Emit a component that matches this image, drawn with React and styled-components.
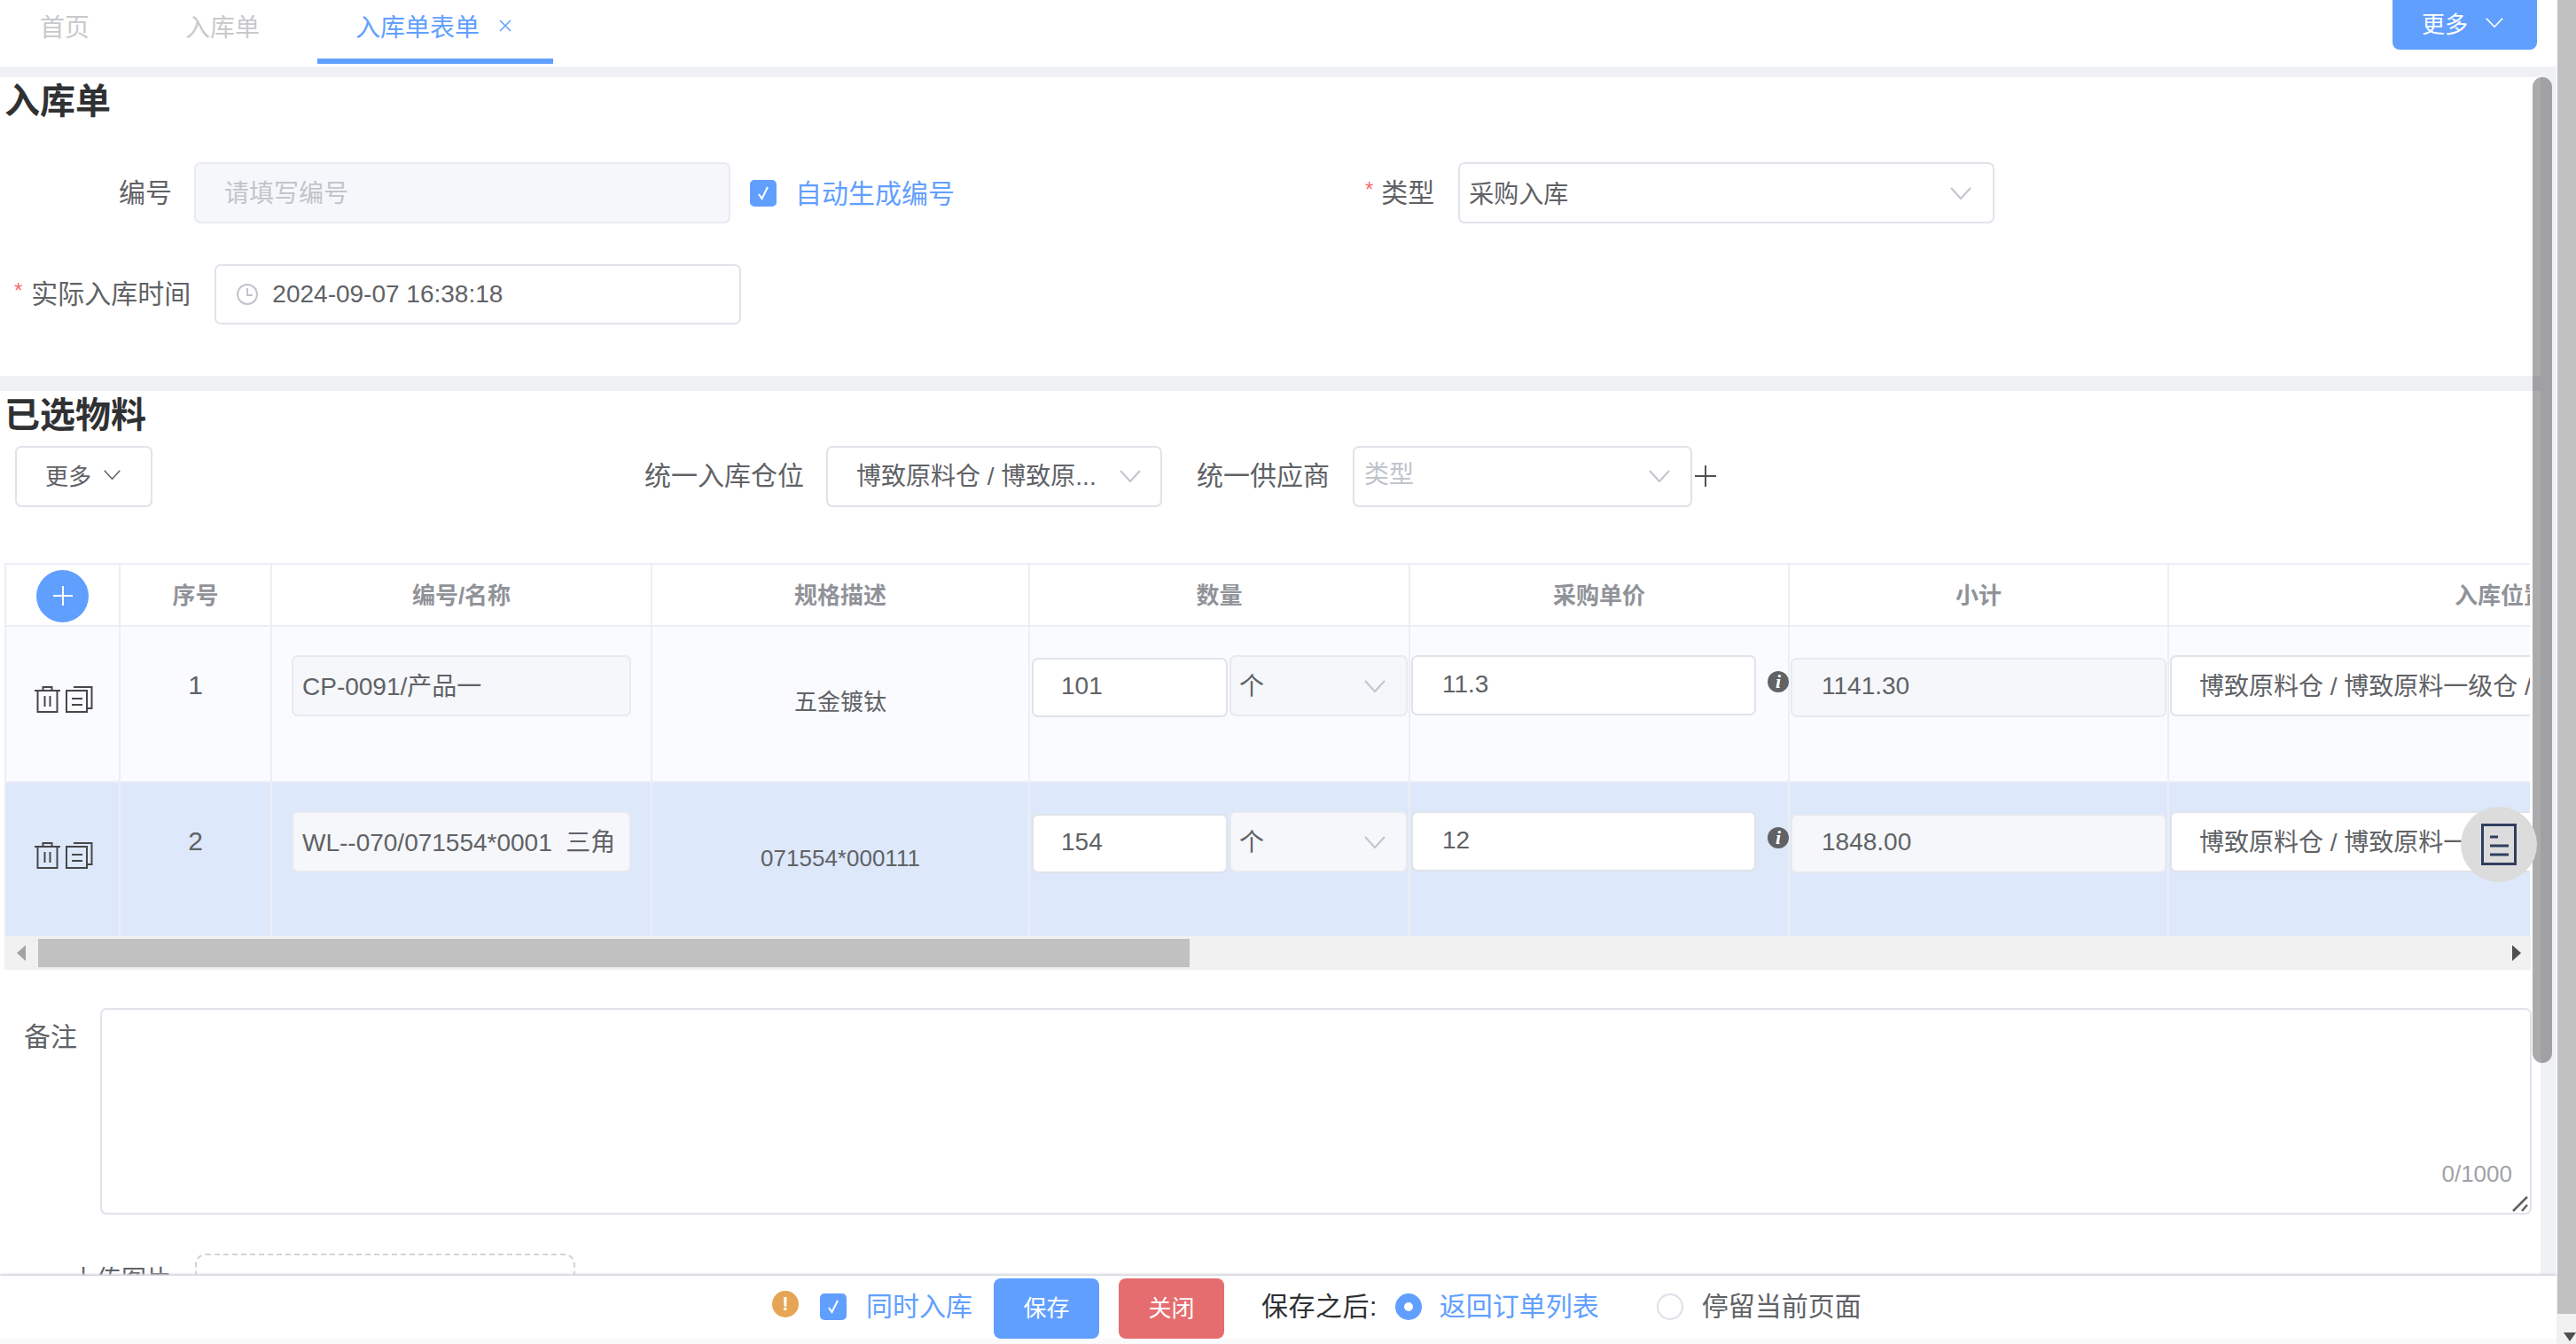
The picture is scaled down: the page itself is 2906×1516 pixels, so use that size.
import React from 'react';
import styled, { createGlobalStyle } from 'styled-components';

const BLUE = '#619fff';
const FONT = '"Liberation Sans", "Noto Sans CJK SC", sans-serif';
const TEXT = '#606266';
const LINE = '#ebeef5';
const INPUT_LINE = '#e0e3ea';
const COLUMNS = '129px 171px 429px 426px 429px 428px 428px 750px';

const Global = createGlobalStyle`
  * { box-sizing: border-box; }
  html, body { margin: 0; padding: 0; background: #fff; overflow: hidden; }
  body { font-family: ${FONT}; color: ${TEXT}; }
`;

const Page = styled.div`
  width: 2906px;
  height: 1516px;
  display: flex;
  overflow: hidden;
  background: #fff;
`;
const Main = styled.div`
  width: 2884px;
  height: 1516px;
  display: flex;
  flex-direction: column;
  background: #f0f1f5;
`;

/* page scrollbar */
const PageScroll = styled.div`
  width: 21px;
  margin-left: 1px;
  display: flex;
  flex-direction: column;
`;
const PageThumb = styled.div`
  height: 1482px;
  background: #c1c1c1;
`;
const PageTrack = styled.div`
  flex: 1;
  background: #f1f1f1;
  display: flex;
  align-items: flex-end;
  padding: 0 0 3px 7px;
`;
const ArrowDown = styled.div`
  border-left: 7px solid transparent;
  border-right: 7px solid transparent;
  border-top: 10px solid #505050;
`;

/* tabs */
const TabBar = styled.div`
  height: 75px;
  flex: none;
  display: flex;
  align-items: flex-start;
  gap: 20px;
  padding-left: 1px;
  background: #fff;
`;
const Tab = styled.div`
  height: 72px;
  margin-left: ${(p) => (p.$active ? '1px' : '0')};
  padding: 0 ${(p) => (p.$active ? '47px' : '44px')} 9px ${(p) => (p.$active ? '43px' : '44px')};
  border-bottom: 6px solid ${(p) => (p.$active ? BLUE : 'transparent')};
  display: flex;
  align-items: center;
  font-size: 28px;
  color: ${(p) => (p.$active ? BLUE : '#c8c9cc')};
`;
const TabClose = styled.svg`
  margin-left: 22px;
  width: 14px;
  height: 14px;
`;
const MoreTop = styled.div`
  margin-left: auto;
  margin-right: 22px;
  width: 163px;
  height: 56px;
  padding: 0 0 6px 33px;
  border-radius: 0 0 8px 8px;
  background: ${BLUE};
  color: #fff;
  font-size: 26px;
  display: flex;
  align-items: center;
  gap: 20px;
`;

/* scrolling pane */
const Pane = styled.div`
  position: relative;
  flex: 1;
  margin-top: 8px;
  min-height: 0;
  overflow: hidden;
  background: #f0f1f5;
`;
const PaneThumb = styled.div`
  position: absolute;
  z-index: 1;
  left: 2857px;
  top: 4px;
  width: 22px;
  height: 1112px;
  border-radius: 11px;
  background: rgba(0, 0, 0, 0.33);
`;
const Section = styled.section`
  width: 2866px;
  background: #fff;
  height: ${(p) => p.$h}px;
  margin-bottom: ${(p) => p.$mb || 0}px;
`;
const Title = styled.h2`
  margin: ${(p) => p.$mt}px 0 0;
  padding-left: 5px;
  height: 54px;
  line-height: 54px;
  font-size: 40px;
  font-weight: 700;
  color: #303133;
`;
const FormRow = styled.div`
  display: flex;
  align-items: center;
  margin-top: ${(p) => p.$mt}px;
  padding-left: ${(p) => p.$pl}px;
`;
const Label = styled.label`
  font-size: 30px;
  line-height: 40px;
  color: ${TEXT};
  margin-left: ${(p) => p.$ml || 0}px;
  white-space: nowrap;
  flex: none;
`;
const Star = styled.span`
  font-size: 24px;
  line-height: 24px;
  color: #f56c6c;
  flex: none;
  margin-left: ${(p) => p.$ml || 0}px;
  margin-right: ${(p) => p.$mr}px;
  margin-bottom: 8px;
`;
const Field = styled.div`
  flex: none;
  display: flex;
  align-items: center;
  width: ${(p) => p.$w}px;
  height: ${(p) => p.$h || 69}px;
  margin-left: ${(p) => p.$ml || 0}px;
  margin-top: ${(p) => p.$mt || 0}px;
  padding: 0 ${(p) => p.$pr || 0}px 4px ${(p) => p.$pl || 0}px;
  border: 2px solid ${(p) => (p.$off ? '#e8eaf0' : INPUT_LINE)};
  border-radius: 7px;
  background: ${(p) => (p.$off ? '#f5f7fa' : '#fff')};
  color: ${(p) => (p.$muted ? '#c0c4cc' : TEXT)};
  font-size: 28px;
  white-space: nowrap;
  overflow: hidden;
`;
const FieldText = styled.span`
  flex: 1;
  min-width: 0;
  overflow: hidden;
  white-space: pre;
  padding-top: ${(p) => p.$down || 0}px;
  padding-bottom: ${(p) => p.$up || 0}px;
`;
const FieldChevron = styled.span`
  display: flex;
  flex: none;
  margin-top: 4px;
`;
const CheckBox = styled.span`
  flex: none;
  width: 30px;
  height: 30px;
  margin-left: ${(p) => p.$ml}px;
  margin-bottom: ${(p) => p.$mb || 0}px;
  border-radius: 5px;
  background: ${BLUE};
  display: flex;
  align-items: center;
  justify-content: center;
`;
const BlueText = styled.span`
  flex: none;
  font-size: 30px;
  color: ${BLUE};
  margin-left: ${(p) => p.$ml}px;
  margin-bottom: ${(p) => p.$mb || 0}px;
`;
const ClockIcon = styled.svg`
  width: 24px;
  height: 24px;
  margin-right: 16px;
  margin-top: 4px;
  flex: none;
`;
const Chevron = styled.svg`
  width: ${(p) => p.$w || 24}px;
  height: ${(p) => p.$hh || 14}px;
  flex: none;
`;

/* toolbar above table */
const Toolbar = styled.div`
  display: flex;
  align-items: center;
  height: 70px;
  margin-top: 7px;
  padding-left: 17px;
`;
const MoreButton = styled.div`
  width: 155px;
  height: 69px;
  padding: 0 0 3px 32px;
  border: 2px solid ${INPUT_LINE};
  border-radius: 7px;
  font-size: 26px;
  display: flex;
  align-items: center;
  gap: 14px;
`;
const PlusIcon = styled.svg`
  width: 24px;
  height: 24px;
  margin-left: 3px;
  flex: none;
`;

/* table */
const TableWrap = styled.div`
  margin: 63px 0 0 5px;
  width: 2850px;
`;
const TableClip = styled.div`
  width: 2849px;
  overflow: hidden;
`;
const Table = styled.div`
  width: 3200px;
  border-left: 2px solid ${LINE};
  border-top: 2px solid ${LINE};
`;
const HeadRow = styled.div`
  display: grid;
  grid-template-columns: ${COLUMNS};
  height: 70px;
  background: #fff;
  border-bottom: 2px solid ${LINE};
`;
const HeadCell = styled.div`
  display: flex;
  align-items: center;
  justify-content: center;
  padding-bottom: 3px;
  border-right: 2px solid ${LINE};
  font-size: 26px;
  font-weight: 700;
  color: #909399;
  white-space: nowrap;
`;
const AddCircle = styled.div`
  width: 59px;
  height: 59px;
  margin-top: 5px;
  border-radius: 50%;
  background: ${BLUE};
  display: flex;
  align-items: center;
  justify-content: center;
`;
const Row = styled.div`
  display: grid;
  grid-template-columns: ${COLUMNS};
  height: ${(p) => p.$h}px;
  background: ${(p) => p.$bg};
  border-bottom: ${(p) => (p.$last ? 'none' : `2px solid ${LINE}`)};
`;
const Cell = styled.div`
  border-right: 2px solid ${LINE};
  display: flex;
  align-items: flex-start;
`;
const ActionCell = styled(Cell)`
  padding: 66px 0 0 32px;
  gap: 5px;
`;
const SeqCell = styled(Cell)`
  justify-content: center;
  padding-top: 48px;
  font-size: 30px;
  line-height: 36px;
`;
const SpecCell = styled(Cell)`
  justify-content: center;
  padding-top: 67px;
  font-size: 26px;
  line-height: 36px;
`;
const InfoBadge = styled.span`
  flex: none;
  width: 24px;
  height: 24px;
  margin: 50px 0 0 13px;
  border-radius: 50%;
  background: ${TEXT};
  color: #fff;
  font: italic 700 22px/24px "Liberation Serif", serif;
  text-align: center;
`;

/* horizontal scrollbar */
const HScroll = styled.div`
  height: 38px;
  background: #f1f1f1;
  display: flex;
  align-items: center;
  padding: 0 11px 0 14px;
`;
const ArrowLeft = styled.div`
  border-top: 9px solid transparent;
  border-bottom: 9px solid transparent;
  border-right: 10px solid #a3a3a3;
`;
const ArrowRight = styled.div`
  margin-left: auto;
  border-top: 9px solid transparent;
  border-bottom: 9px solid transparent;
  border-left: 10px solid #505050;
`;
const HThumb = styled.div`
  width: 1299px;
  height: 32px;
  margin-left: 14px;
  background: #c1c1c1;
`;

/* floating doc button */
const FloatButton = styled.div`
  position: absolute;
  z-index: 2;
  left: 2776px;
  top: 827px;
  width: 86px;
  height: 85px;
  border-radius: 50%;
  background: #dcdcdc;
  display: flex;
  align-items: center;
  justify-content: center;
`;

/* remark */
const RemarkRow = styled.div`
  display: flex;
  align-items: flex-start;
  margin-top: 43px;
  padding-left: 27px;
`;
const RemarkLabel = styled(Label)`
  margin-top: 13px;
`;
const RemarkBox = styled.div`
  position: relative;
  width: 2743px;
  height: 233px;
  margin-left: 26px;
`;
const RemarkArea = styled.textarea`
  display: block;
  width: 100%;
  height: 100%;
  border: 2px solid ${INPUT_LINE};
  border-radius: 7px;
  resize: none;
  outline: none;
  background: #fff;
`;
const Counter = styled.span`
  position: absolute;
  right: 22px;
  bottom: 30px;
  font-size: 26px;
  color: #a0a2a8;
`;
const Grip = styled.svg`
  position: absolute;
  right: 4px;
  bottom: 3px;
  width: 18px;
  height: 18px;
`;

/* upload */
const UploadRow = styled.div`
  display: flex;
  align-items: flex-start;
  margin-top: 44px;
  padding-left: 81px;
`;
const UploadLabel = styled(Label)`
  margin-top: 10px;
  font-size: 28px;
`;
const UploadBox = styled.div`
  width: 429px;
  height: 200px;
  margin-left: 27px;
  border: 2px dashed #d0d4dc;
  border-radius: 12px;
`;

/* footer */
const Footer = styled.div`
  position: relative;
  z-index: 3;
  flex: none;
  height: 77px;
  display: flex;
  align-items: center;
  padding: 3px 0 0 871px;
  background: #fff;
  border-bottom: 6px solid #fafafa;
  box-shadow: 0 -2px 2px #d6d7dd;
`;
const WarnBadge = styled.span`
  flex: none;
  width: 30px;
  height: 30px;
  margin-bottom: 10px;
  border-radius: 50%;
  background: #e6a555;
  color: #fff;
  font-size: 22px;
  font-weight: 700;
  line-height: 30px;
  text-align: center;
`;
const ActionButton = styled.button`
  flex: none;
  width: 119px;
  height: 68px;
  margin-left: ${(p) => p.$ml}px;
  padding: 0 0 5px;
  border: none;
  border-radius: 8px;
  background: ${(p) => p.$bg};
  color: #fff;
  font: 26px ${FONT};
`;
const SaveAfter = styled.span`
  flex: none;
  margin: 0 0 10px 42px;
  font-size: 30px;
  letter-spacing: 0.5px;
  color: #303133;
`;
const Radio = styled.span`
  flex: none;
  width: 30px;
  height: 30px;
  margin-left: ${(p) => p.$ml}px;
  margin-bottom: 4px;
  border-radius: 50%;
  border: ${(p) => (p.$on ? `10px solid ${BLUE}` : '2px solid #dcdfe6')};
  background: #fff;
`;
const GrayText = styled.span`
  flex: none;
  margin: 0 0 10px ${(p) => p.$ml}px;
  font-size: 30px;
  color: ${TEXT};
`;

const Down = ({ color = '#c0c4cc', w, h }) => (
  <Chevron $w={w} $hh={h} viewBox="0 0 24 14" preserveAspectRatio="none" fill="none" stroke={color} strokeWidth="2">
    <path d="M1 1 L12 13 L23 1" />
  </Chevron>
);

const FieldDown = () => (
  <FieldChevron><Down /></FieldChevron>
);

const Check = () => (
  <svg width="20" height="20" viewBox="0 0 20 20" fill="none" stroke="#fff" strokeWidth="2">
    <path d="M5 11 L8.5 16 L15 3" />
  </svg>
);

const Trash = () => (
  <svg width="30" height="31" viewBox="0 0 30 31" fill="none" stroke="#474747" strokeWidth="2">
    <path d="M0 6H29" />
    <path d="M9.5 6V2H19.5V6" />
    <path d="M3.5 6V30H25.5V6" />
    <path d="M11.5 12V24M17.5 12V24" />
  </svg>
);

const Copy = () => (
  <svg width="31" height="31" viewBox="0 0 31 31" fill="none" stroke="#474747" strokeWidth="2">
    <rect x="1" y="6" width="23" height="24" />
    <path d="M7 15H19M7 22H19" />
    <path d="M9 2H29.5V26H25" />
  </svg>
);

const rows = [
  {
    id: 1, h: 176, bg: '#fafbff',
    name: 'CP-0091/产品一', spec: '五金镀钛', qty: '101', price: '11.3', total: '1141.30',
    place: '博致原料仓 / 博致原料一级仓 / 博致原料一级仓一号库位',
  },
  {
    id: 2, h: 173, bg: '#dde8fa', last: true,
    name: 'WL--070/071554*0001  三角', spec: '071554*000111', qty: '154', price: '12', total: '1848.00',
    place: '博致原料仓 / 博致原料一级仓 / 博致原料一级仓一号库位',
  },
];

export default function App() {
  return (
    <Page>
      <Global />
      <Main>
        <TabBar>
          <Tab>首页</Tab>
          <Tab>入库单</Tab>
          <Tab $active>
            入库单表单
            <TabClose viewBox="0 0 14 14" fill="none" stroke={BLUE} strokeWidth="1.5">
              <path d="M1 1L13 13M13 1L1 13" />
            </TabClose>
          </Tab>
          <MoreTop>
            更多
            <Down color="#fff" w={20} h={11} />
          </MoreTop>
        </TabBar>

        <Pane>
          <PaneThumb />
          <Section $h={337} $mb={17}>
            <Title $mt={4}>入库单</Title>
            <FormRow $mt={42} $pl={134}>
              <Label>编号</Label>
              <Field $w={605} $ml={25} $off $muted $pl={32}>请填写编号</Field>
              <CheckBox $ml={22}><Check /></CheckBox>
              <BlueText $ml={21} $mb={4}>自动生成编号</BlueText>
              <Star $ml={463} $mr={9}>*</Star>
              <Label>类型</Label>
              <Field $w={605} $ml={27} $pl={10} $pr={24}>
                <FieldText $down={2}>采购入库</FieldText>
                <FieldDown />
              </Field>
            </FormRow>
            <FormRow $mt={46} $pl={16}>
              <Star $mr={10}>*</Star>
              <Label>实际入库时间</Label>
              <Field $w={594} $h={68} $ml={27} $pl={23}>
                <ClockIcon viewBox="0 0 24 24" fill="none" stroke="#c0c4cc" strokeWidth="2">
                  <circle cx="12" cy="12" r="11" />
                  <path d="M12 5V13H18" />
                </ClockIcon>
                <FieldText $down={3}>2024-09-07 16:38:18</FieldText>
              </Field>
            </FormRow>
          </Section>

          <Section $h={1100}>
            <Title $mt={3}>已选物料</Title>
            <Toolbar>
              <MoreButton>
                更多
                <Down color="#606266" w={19} h={11} />
              </MoreButton>
              <Label $ml={555}>统一入库仓位</Label>
              <Field $w={379} $ml={25} $pl={32} $pr={22}>
                <FieldText>博致原料仓 / 博致原...</FieldText>
                <FieldDown />
              </Field>
              <Label $ml={39}>统一供应商</Label>
              <Field $w={383} $ml={26} $muted $pl={11} $pr={23}>
                <FieldText $up={4}>类型</FieldText>
                <FieldDown />
              </Field>
              <PlusIcon viewBox="0 0 24 24" fill="none" stroke="#505050" strokeWidth="2">
                <path d="M0 12H24M12 0V24" />
              </PlusIcon>
            </Toolbar>

            <TableWrap>
              <TableClip>
                <Table>
                  <HeadRow>
                    <HeadCell>
                      <AddCircle>
                        <svg width="22" height="22" viewBox="0 0 22 22" fill="none" stroke="#fff" strokeWidth="2">
                          <path d="M0 11H22M11 0V22" />
                        </svg>
                      </AddCircle>
                    </HeadCell>
                    <HeadCell>序号</HeadCell>
                    <HeadCell>编号/名称</HeadCell>
                    <HeadCell>规格描述</HeadCell>
                    <HeadCell>数量</HeadCell>
                    <HeadCell>采购单价</HeadCell>
                    <HeadCell>小计</HeadCell>
                    <HeadCell>入库位置</HeadCell>
                  </HeadRow>
                  {rows.map((r) => (
                    <Row key={r.id} $h={r.h} $bg={r.bg} $last={r.last}>
                      <ActionCell><Trash /><Copy /></ActionCell>
                      <SeqCell>{r.id}</SeqCell>
                      <Cell>
                        <Field $w={383} $ml={22} $mt={32} $off $pl={10}>
                          <FieldText>{r.name}</FieldText>
                        </Field>
                      </Cell>
                      <SpecCell>{r.spec}</SpecCell>
                      <Cell>
                        <Field $w={221} $h={67} $ml={2} $mt={35} $pl={31}>{r.qty}</Field>
                        <Field $w={201} $ml={2} $mt={32} $off $pl={9} $pr={23}>
                          <FieldText>个</FieldText>
                          <FieldDown />
                        </Field>
                      </Cell>
                      <Cell>
                        <Field $w={389} $h={68} $ml={1} $mt={32} $pl={33}>
                          <FieldText $down={1}>{r.price}</FieldText>
                        </Field>
                        <InfoBadge>i</InfoBadge>
                      </Cell>
                      <Cell>
                        <Field $w={424} $h={67} $ml={1} $mt={35} $off $pl={33}>{r.total}</Field>
                      </Cell>
                      <Cell>
                        <Field $w={740} $ml={1} $mt={32} $pl={31}>{r.place}</Field>
                      </Cell>
                    </Row>
                  ))}
                </Table>
              </TableClip>
              <HScroll>
                <ArrowLeft />
                <HThumb />
                <ArrowRight />
              </HScroll>
            </TableWrap>

            <RemarkRow>
              <RemarkLabel>备注</RemarkLabel>
              <RemarkBox>
                <RemarkArea aria-label="备注" />
                <Counter>0/1000</Counter>
                <Grip viewBox="0 0 18 18" fill="none" stroke="#606060" strokeWidth="2.5">
                  <path d="M1 17L17 1M11 17L17 10" />
                </Grip>
              </RemarkBox>
            </RemarkRow>

            <UploadRow>
              <UploadLabel>上传图片</UploadLabel>
              <UploadBox />
            </UploadRow>
          </Section>

          <FloatButton>
            <svg width="40" height="47" viewBox="0 0 40 47" fill="none" stroke="#2f3f5f" strokeWidth="3">
              <rect x="1.5" y="1.5" width="37" height="44" />
              <path d="M10 15H19M10 25H31M10 35H31" />
            </svg>
          </FloatButton>
        </Pane>

        <Footer>
          <WarnBadge>!</WarnBadge>
          <CheckBox $ml={24} $mb={4}><Check /></CheckBox>
          <BlueText $ml={22} $mb={10}>同时入库</BlueText>
          <ActionButton $ml={24} $bg={BLUE}>保存</ActionButton>
          <ActionButton $ml={22} $bg="#e56d6f">关闭</ActionButton>
          <SaveAfter>保存之后:</SaveAfter>
          <Radio $ml={20} $on />
          <BlueText $ml={20} $mb={10}>返回订单列表</BlueText>
          <Radio $ml={65} />
          <GrayText $ml={21}>停留当前页面</GrayText>
        </Footer>
      </Main>
      <PageScroll>
        <PageThumb />
        <PageTrack><ArrowDown /></PageTrack>
      </PageScroll>
    </Page>
  );
}
